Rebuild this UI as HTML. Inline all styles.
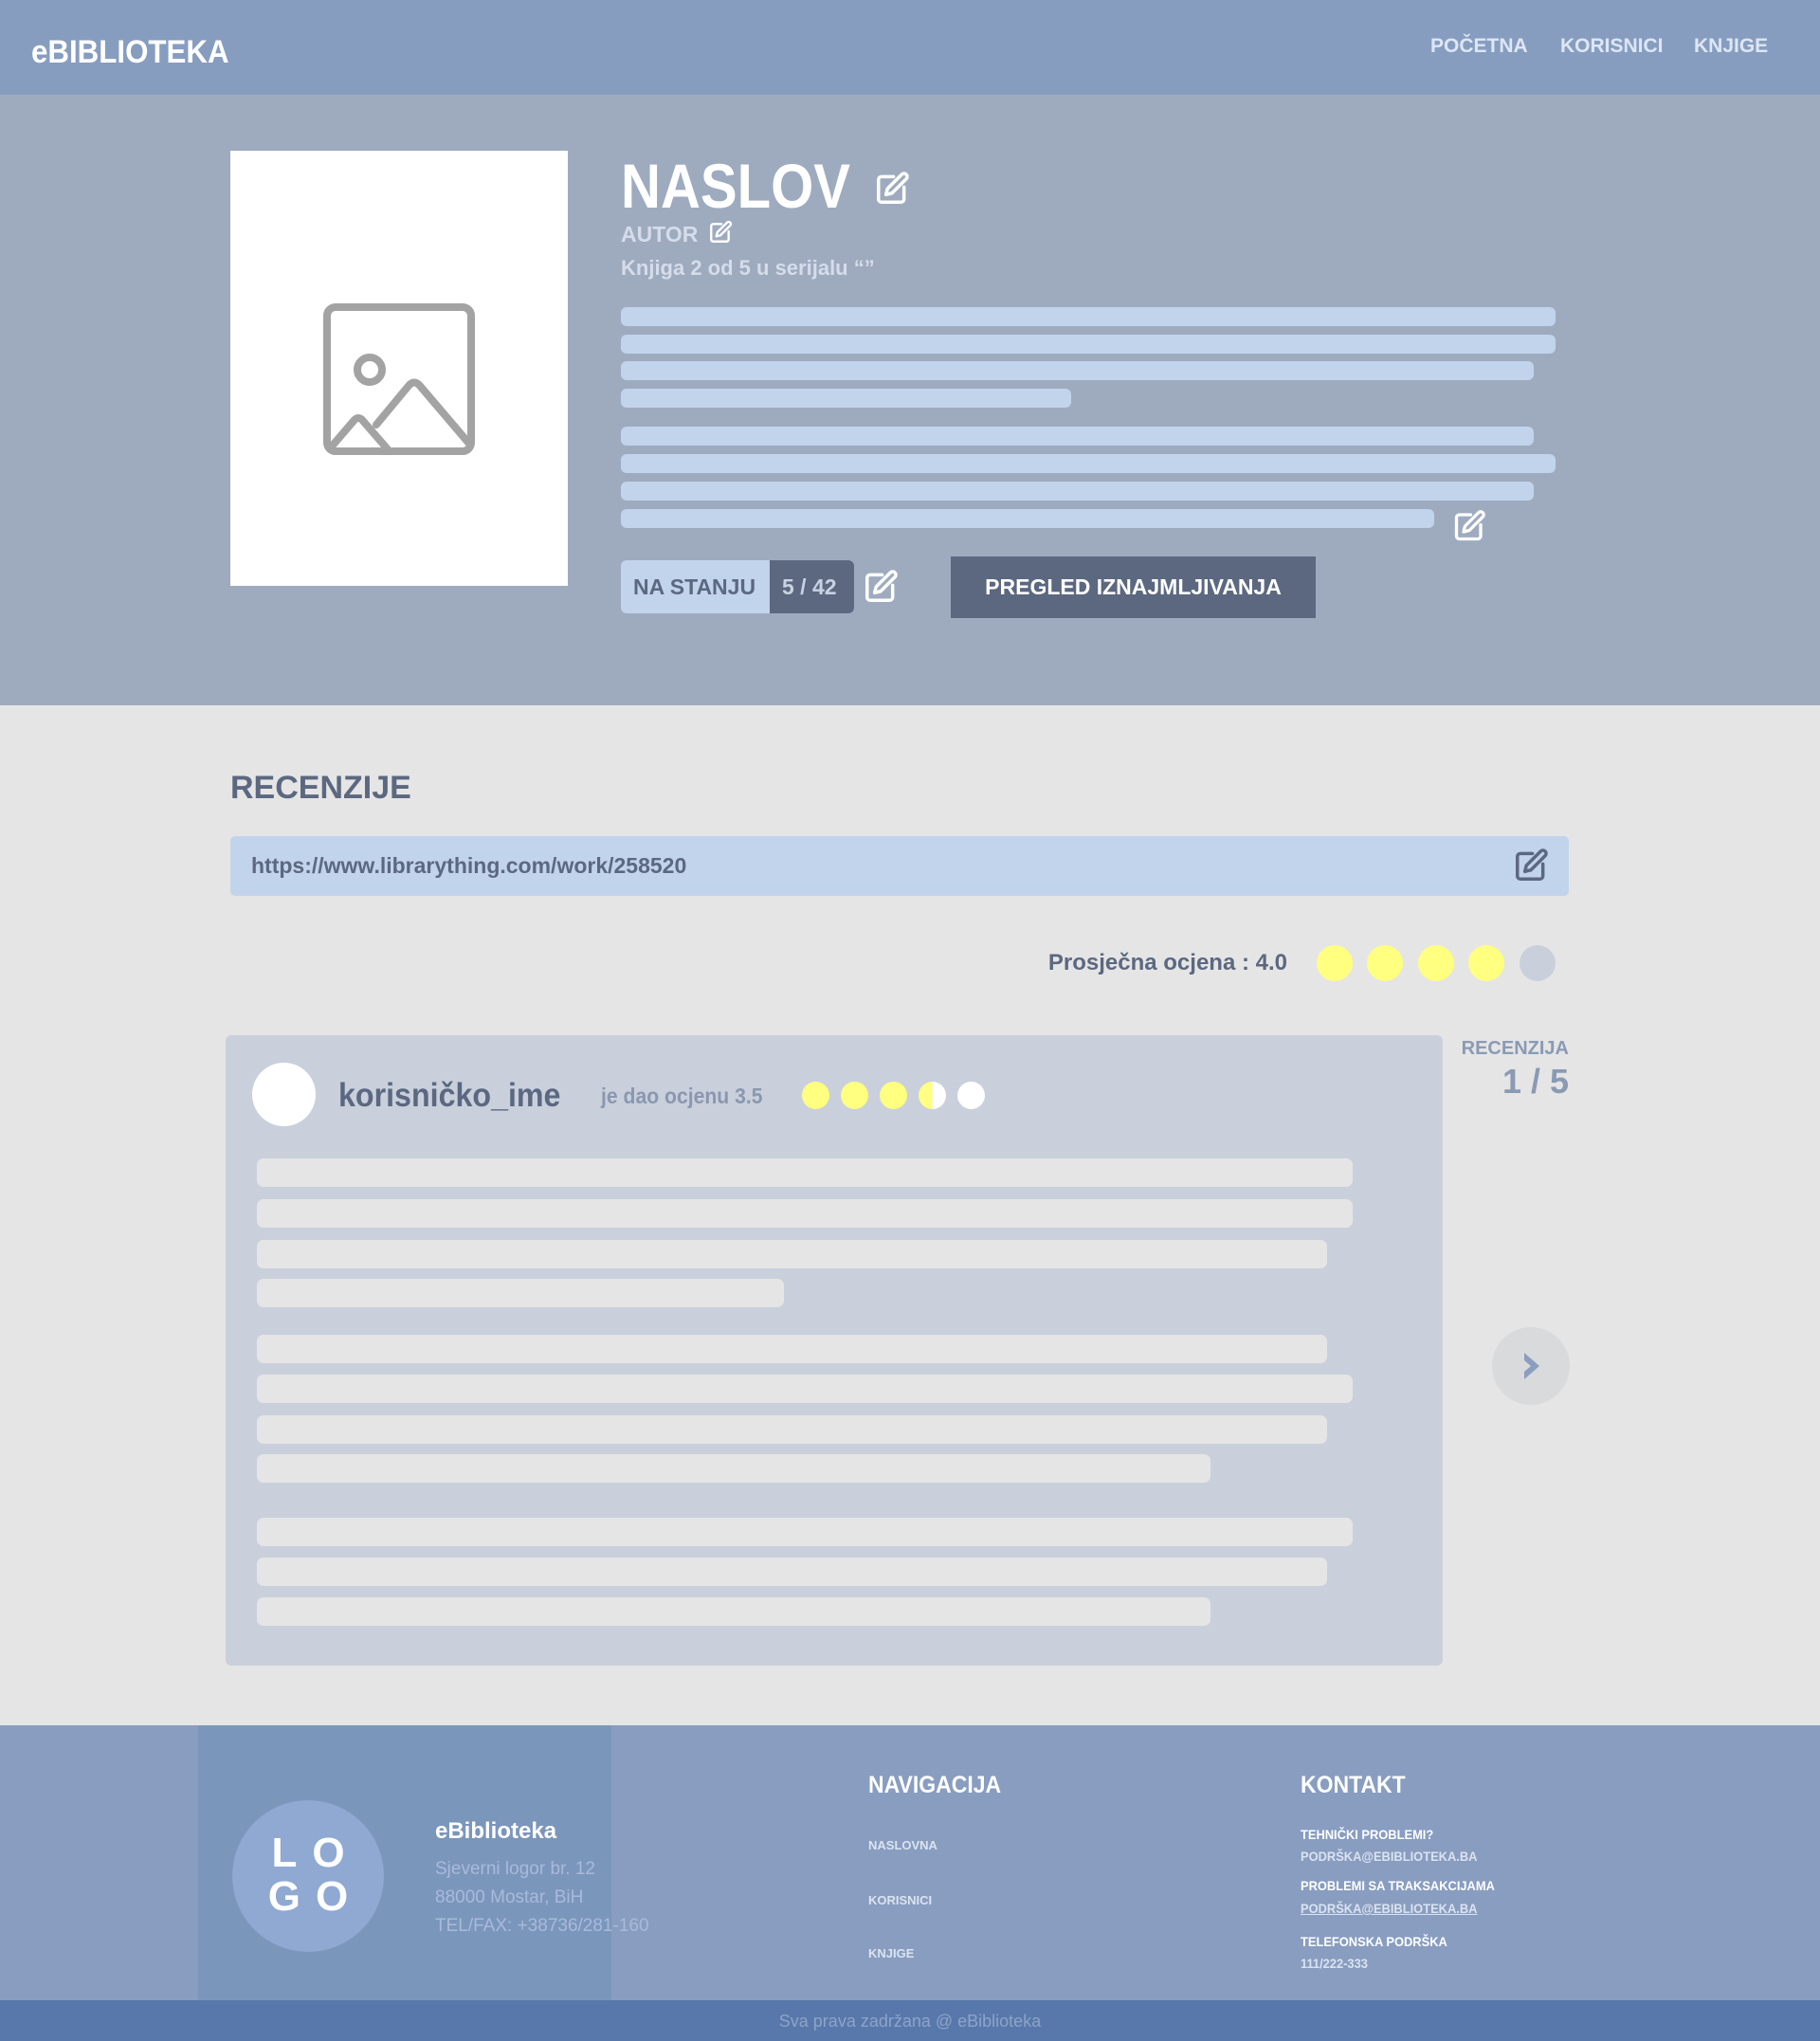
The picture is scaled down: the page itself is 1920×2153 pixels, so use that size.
<!DOCTYPE html>
<html><head><meta charset="utf-8"><style>
*{margin:0;padding:0;box-sizing:border-box}
body{width:1920px;height:2153px;font-family:"Liberation Sans",sans-serif;background:#e5e5e5;position:relative;overflow:hidden}
.a{position:absolute}
.b{font-weight:bold}
.bar{position:absolute;height:20px;border-radius:6px;background:#c2d3ec}
.cb{position:absolute;height:30px;border-radius:7px;background:#e5e5e5}
.c{position:absolute;border-radius:50%}
.t{white-space:nowrap;line-height:1}
.n{transform:scaleX(0.92);transform-origin:left center}
</style></head><body>
<svg width="0" height="0" style="position:absolute"><defs>
<g id="ed" fill="none" stroke-width="2.2" stroke-linecap="round" stroke-linejoin="round">
<path d="M13 4H5a2 2 0 0 0-2 2v13a2 2 0 0 0 2 2h13a2 2 0 0 0 2-2v-8"/>
<path d="M18.5 2.5a2.1 2.1 0 0 1 3 3L12 15l-4 1 1-4z"/>
</g></defs></svg>

<!-- header -->
<div class="a" style="left:0;top:0;width:1920px;height:100px;background:#879dc0"></div>
<div class="a t b n" style="left:33px;top:38px;font-size:34px;color:#fff">eBIBLIOTEKA</div>
<div class="a t b" style="left:1509px;top:38px;font-size:21px;color:#dde6f4">POČETNA</div>
<div class="a t b" style="left:1646px;top:38px;font-size:21px;color:#dde6f4">KORISNICI</div>
<div class="a t b" style="left:1787px;top:38px;font-size:21px;color:#dde6f4">KNJIGE</div>

<!-- hero -->
<div class="a" style="left:0;top:100px;width:1920px;height:644px;background:#9eabbf"></div>
<div class="a" style="left:243px;top:159px;width:356px;height:459px;background:#fff"></div>
<svg class="a" style="left:341px;top:320px" width="162" height="162" viewBox="0 0 162 162" fill="none" stroke="#a3a3a3" stroke-width="8" stroke-linejoin="round" stroke-linecap="round">
<rect x="4" y="4" width="152" height="152" rx="9"/>
<circle cx="49" cy="70" r="13"/>
<path d="M8 152 L32 124 Q37 118 42 124 L68 154"/>
<path d="M56 128 L90 87 Q96 80 102 87 L154 148"/>
</svg>
<div class="a t b" style="left:655px;top:163px;font-size:66px;color:#fff;transform:scaleX(0.88);transform-origin:left center">NASLOV</div>
<svg class="a" style="left:922px;top:180px" width="38" height="38" viewBox="0 0 24 24" stroke="#fff"><use href="#ed"/></svg>
<div class="a t b" style="left:655px;top:236px;font-size:23px;color:#d5dcea">AUTOR</div>
<svg class="a" style="left:747px;top:232px" width="26" height="26" viewBox="0 0 24 24" stroke="#fff"><use href="#ed"/></svg>
<div class="a t b" style="left:655px;top:272px;font-size:22px;color:#d5dcea">Knjiga 2 od 5 u serijalu “”</div>
<div class="bar" style="left:655px;top:324px;width:986px"></div>
<div class="bar" style="left:655px;top:353px;width:986px"></div>
<div class="bar" style="left:655px;top:381px;width:963px"></div>
<div class="bar" style="left:655px;top:410px;width:475px"></div>
<div class="bar" style="left:655px;top:450px;width:963px"></div>
<div class="bar" style="left:655px;top:479px;width:986px"></div>
<div class="bar" style="left:655px;top:508px;width:963px"></div>
<div class="bar" style="left:655px;top:537px;width:858px"></div>
<svg class="a" style="left:1532px;top:537px" width="36" height="36" viewBox="0 0 24 24" stroke="#fff"><use href="#ed"/></svg>
<div class="a" style="left:655px;top:591px;width:246px;height:56px;border-radius:6px;overflow:hidden;background:#c2d3ec">
<div class="a" style="left:157px;top:0;width:89px;height:56px;background:#5b6880"></div>
<div class="a t b" style="left:13px;top:17px;font-size:23px;color:#5b6880">NA STANJU</div>
<div class="a t b" style="left:170px;top:17px;font-size:23px;color:#c8d2e2">5 / 42</div>
</div>
<svg class="a" style="left:910px;top:600px" width="38" height="38" viewBox="0 0 24 24" stroke="#fff"><use href="#ed"/></svg>
<div class="a" style="left:1003px;top:587px;width:385px;height:65px;background:#5b6880"></div>
<div class="a t b" style="left:1003px;top:608px;width:385px;text-align:center;font-size:23px;color:#fff">PREGLED IZNAJMLJIVANJA</div>

<!-- reviews -->
<div class="a t b" style="left:243px;top:814px;font-size:34px;color:#5b6880">RECENZIJE</div>
<div class="a" style="left:243px;top:882px;width:1412px;height:63px;border-radius:5px;background:#c2d3ec"></div>
<div class="a t b" style="left:265px;top:902px;font-size:23px;color:#5b6880">https://www.librarything.com/work/258520</div>
<svg class="a" style="left:1596px;top:894px" width="38" height="38" viewBox="0 0 24 24" stroke="#5b6880"><use href="#ed"/></svg>
<div class="a t b" style="left:1000px;top:1004px;width:358px;text-align:right;font-size:24px;color:#5b6880">Prosječna ocjena : 4.0</div>
<div class="c" style="left:1389px;top:997px;width:38px;height:38px;background:#ffff80"></div>
<div class="c" style="left:1442px;top:997px;width:38px;height:38px;background:#ffff80"></div>
<div class="c" style="left:1496px;top:997px;width:38px;height:38px;background:#ffff80"></div>
<div class="c" style="left:1549px;top:997px;width:38px;height:38px;background:#ffff80"></div>
<div class="c" style="left:1603px;top:997px;width:38px;height:38px;background:#c9d0dc"></div>

<div class="a" style="left:238px;top:1092px;width:1284px;height:665px;border-radius:6px;background:#c9d0dc"></div>
<div class="c" style="left:266px;top:1121px;width:67px;height:67px;background:#fff"></div>
<div class="a t b n" style="left:357px;top:1138px;font-size:35px;color:#5b6880">korisničko_ime</div>
<div class="a t b n" style="left:634px;top:1145px;font-size:23px;color:#8a97b0">je dao ocjenu 3.5</div>
<div class="c" style="left:846px;top:1141px;width:29px;height:29px;background:#ffff80"></div>
<div class="c" style="left:887px;top:1141px;width:29px;height:29px;background:#ffff80"></div>
<div class="c" style="left:928px;top:1141px;width:29px;height:29px;background:#ffff80"></div>
<div class="c" style="left:969px;top:1141px;width:29px;height:29px;background:linear-gradient(90deg,#ffff80 50%,#fff 50%)"></div>
<div class="c" style="left:1010px;top:1141px;width:29px;height:29px;background:#fff"></div>
<div class="cb" style="left:271px;top:1222px;width:1156px"></div>
<div class="cb" style="left:271px;top:1265px;width:1156px"></div>
<div class="cb" style="left:271px;top:1308px;width:1129px"></div>
<div class="cb" style="left:271px;top:1349px;width:556px"></div>
<div class="cb" style="left:271px;top:1408px;width:1129px"></div>
<div class="cb" style="left:271px;top:1450px;width:1156px"></div>
<div class="cb" style="left:271px;top:1493px;width:1129px"></div>
<div class="cb" style="left:271px;top:1534px;width:1006px"></div>
<div class="cb" style="left:271px;top:1601px;width:1156px"></div>
<div class="cb" style="left:271px;top:1643px;width:1129px"></div>
<div class="cb" style="left:271px;top:1685px;width:1006px"></div>

<div class="a t b" style="left:1500px;top:1096px;width:155px;text-align:right;font-size:20px;color:#8a9ab5">RECENZIJA</div>
<div class="a t b" style="left:1500px;top:1123px;width:155px;text-align:right;font-size:36px;color:#8a9ab5">1 / 5</div>
<div class="c" style="left:1574px;top:1400px;width:82px;height:82px;background:#d9dadc"></div>
<svg class="a" style="left:1600px;top:1423px" width="32" height="36" viewBox="0 0 32 36"><path d="M8 4 L24 18 L8 32 L8 24 L15 18 L8 12Z" fill="#8a9ec0"/></svg>

<!-- footer -->
<div class="a" style="left:0;top:1820px;width:1920px;height:290px;background:#889dc0"></div>
<div class="a" style="left:209px;top:1820px;width:436px;height:290px;background:#7b96bb"></div>
<div class="c" style="left:245px;top:1899px;width:160px;height:160px;background:#8fa9d2"></div>
<div class="a b" style="left:245px;top:1932px;width:160px;text-align:center;font-size:44px;line-height:46px;color:#fff;letter-spacing:16px;padding-left:16px">LO<br>GO</div>
<div class="a t b" style="left:459px;top:1920px;font-size:24px;color:#fff">eBiblioteka</div>
<div class="a t" style="left:459px;top:1962px;font-size:19px;color:#a9badb">Sjeverni logor br. 12</div>
<div class="a t" style="left:459px;top:1992px;font-size:19px;color:#a9badb">88000 Mostar, BiH</div>
<div class="a t" style="left:459px;top:2022px;font-size:19px;color:#a9badb">TEL/FAX: +38736/281-160</div>
<div class="a t b n" style="left:916px;top:1871px;font-size:25px;color:#fff">NAVIGACIJA</div>
<div class="a t b" style="left:916px;top:1940px;font-size:13px;color:#dbe3f0">NASLOVNA</div>
<div class="a t b" style="left:916px;top:1998px;font-size:13px;color:#dbe3f0">KORISNICI</div>
<div class="a t b" style="left:916px;top:2054px;font-size:13px;color:#dbe3f0">KNJIGE</div>
<div class="a t b n" style="left:1372px;top:1871px;font-size:25px;color:#fff">KONTAKT</div>
<div class="a t b n" style="left:1372px;top:1928px;font-size:14px;color:#fff">TEHNIČKI PROBLEMI?</div>
<div class="a t b n" style="left:1372px;top:1951px;font-size:14px;color:#dbe3f0">PODRŠKA@EBIBLIOTEKA.BA</div>
<div class="a t b n" style="left:1372px;top:1982px;font-size:14px;color:#fff">PROBLEMI SA TRAKSAKCIJAMA</div>
<div class="a t b n" style="left:1372px;top:2006px;font-size:14px;color:#dbe3f0;text-decoration:underline">PODRŠKA@EBIBLIOTEKA.BA</div>
<div class="a t b n" style="left:1372px;top:2041px;font-size:14px;color:#fff">TELEFONSKA PODRŠKA</div>
<div class="a t b n" style="left:1372px;top:2064px;font-size:14px;color:#dbe3f0">111/222-333</div>
<div class="a" style="left:0;top:2110px;width:1920px;height:43px;background:#5878ab"></div>
<div class="a t" style="left:0;top:2123px;width:1920px;text-align:center;font-size:18px;color:#8da3c8">Sva prava zadržana @ eBiblioteka</div>
</body></html>
